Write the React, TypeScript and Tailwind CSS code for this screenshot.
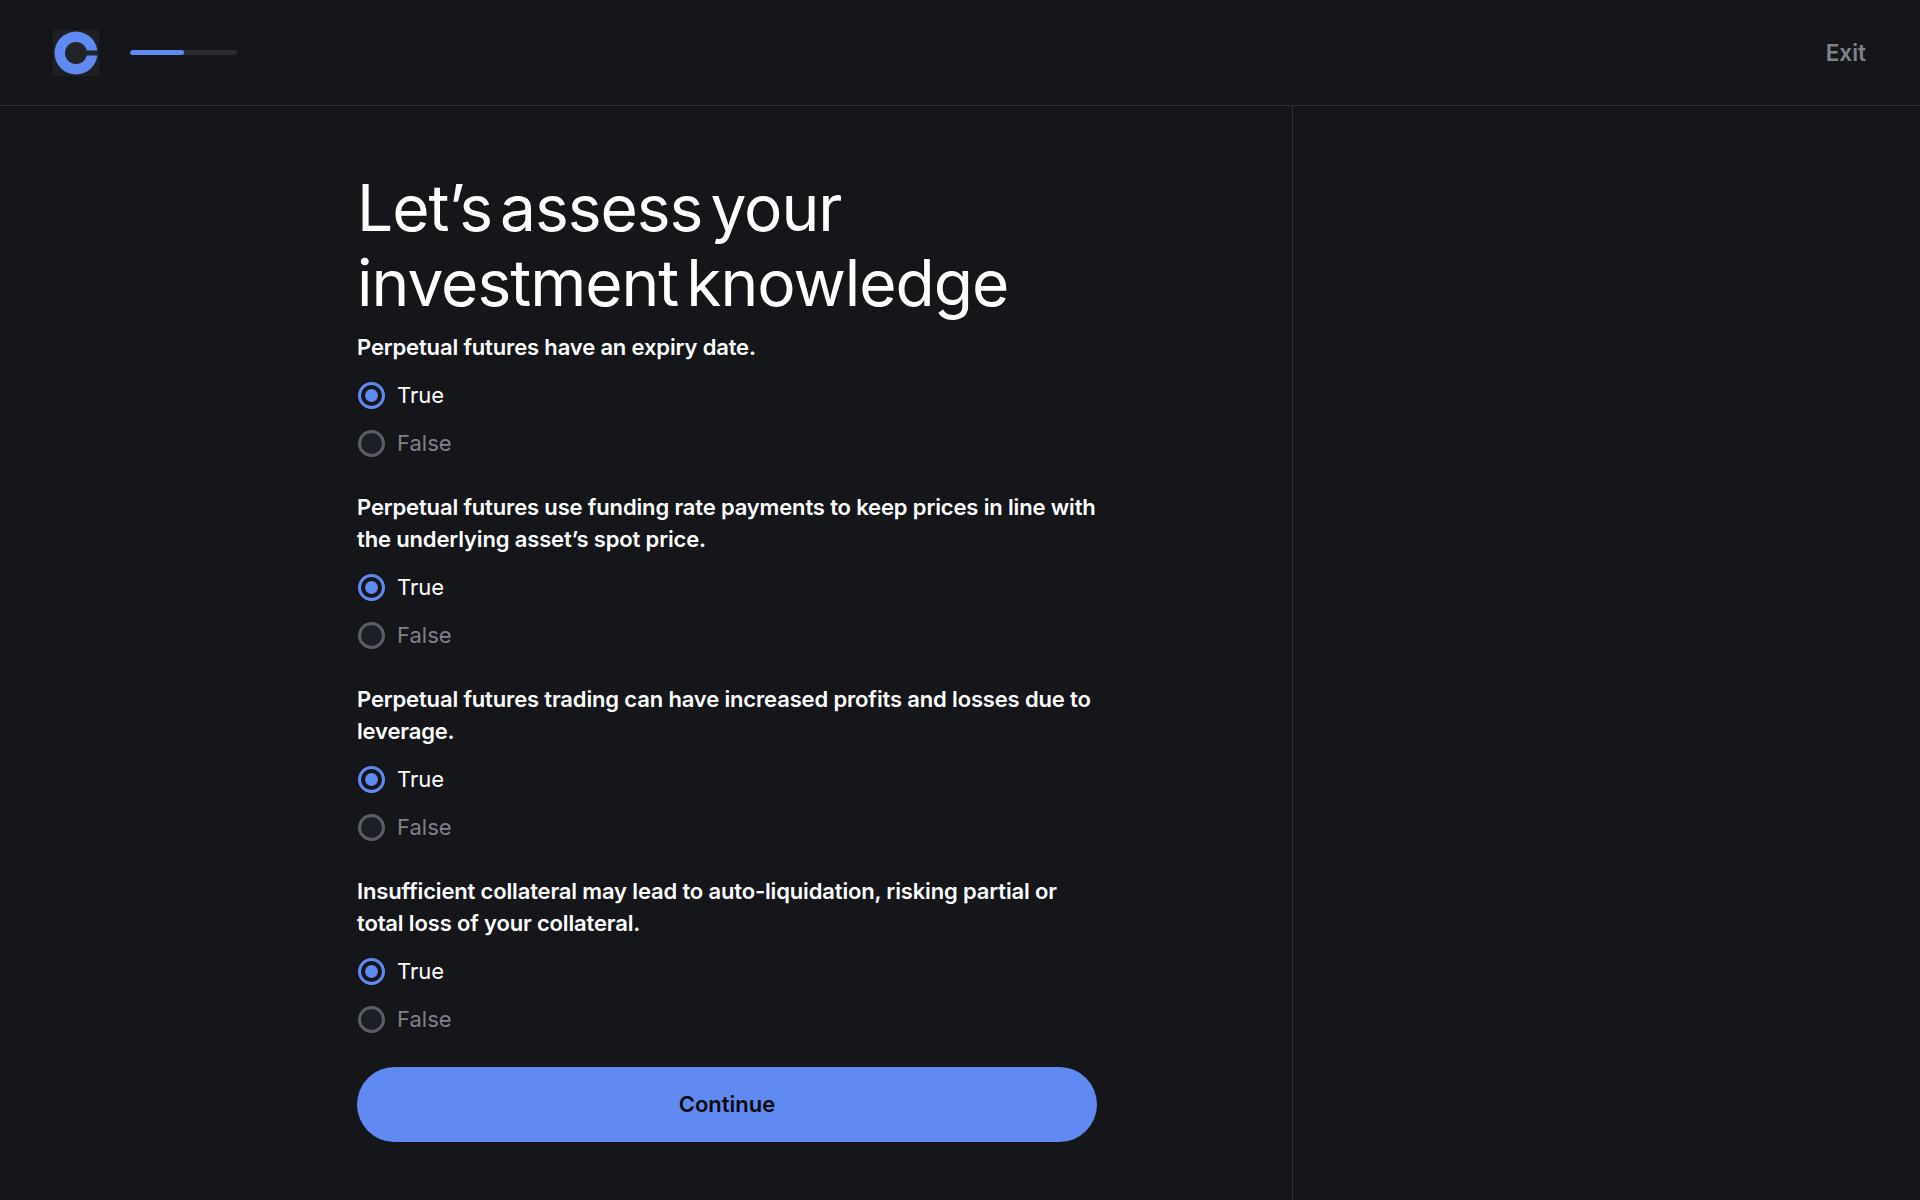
const questions = [
  "Perpetual futures have an expiry date.",
  "Perpetual futures use funding rate payments to keep prices in line with the underlying asset’s spot price.",
  "Perpetual futures trading can have increased profits and losses due to leverage.",
  "Insufficient collateral may lead to auto-liquidation, risking partial or total loss of your collateral.",
];

function Logo() {
  return (
    <div className="flex h-[46px] w-[46px] items-center justify-center bg-[#1d1f24]">
      <svg viewBox="0 0 44 44" className="h-[44px] w-[44px]">
        <circle cx="22" cy="22" r="21.5" fill="#6089f2" />
        <circle cx="22" cy="22" r="11" fill="#212429" />
        <rect x="22" y="19.5" width="22" height="5" fill="#212429" />
      </svg>
    </div>
  );
}

function Radio({ label, selected }: { label: string; selected?: boolean }) {
  return (
    <div className="flex h-12 items-center gap-3 pl-px">
      {selected ? (
        <span className="flex h-[27px] w-[27px] items-center justify-center rounded-full border-[3px] border-[#6089f2] bg-[#14161a]">
          <span className="h-[13px] w-[13px] rounded-full bg-[#6089f2]" />
        </span>
      ) : (
        <span className="h-[27px] w-[27px] rounded-full border-[3px] border-[#5b5e65] bg-[#1c1f25]" />
      )}
      <span className={selected ? "text-[22px] text-white" : "text-[22px] text-[#7f828a]"}>{label}</span>
    </div>
  );
}

function Question({ text }: { text: string }) {
  return (
    <div>
      <p className="text-[22px] leading-8 font-semibold tracking-[-0.15px] text-white">{text}</p>
      <div className="mt-2">
        <Radio label="True" selected />
        <Radio label="False" />
      </div>
    </div>
  );
}

export default function App() {
  return (
    <div className="flex h-[1200px] flex-col overflow-hidden bg-[#14161a] font-['Inter',sans-serif]">
      <header className="flex h-[106px] items-center justify-between border-b border-[#303238] pr-[54px] pl-[53px]">
        <div className="flex items-center gap-[31px]">
          <Logo />
          <div className="h-[5px] w-[107px] overflow-hidden rounded-full bg-[#2b2d31]">
            <div className="h-full w-1/2 rounded-full bg-[#6089f2]" />
          </div>
        </div>
        <button className="pt-px text-[22.5px] font-semibold text-[#7f828a]">Exit</button>
      </header>

      <div className="flex flex-1">
        <main className="w-[1293px] border-r border-[#303238] pt-16 pl-[357px]">
          <div className="w-[740px]">
            <h1 className="text-[64px] leading-[75px] font-normal tracking-[-1px] [word-spacing:-9px] text-white">
              Let’s assess your
              <br />
              investment knowledge
            </h1>
            <div className="mt-[11px] flex flex-col gap-[24px]">
              {questions.map((q) => (
                <Question key={q} text={q} />
              ))}
            </div>
            <button className="mt-6 h-[75px] w-full rounded-full bg-[#6089f2] text-[22px] font-semibold text-[#0a0b0d]">
              Continue
            </button>
          </div>
        </main>
      </div>
    </div>
  );
}
